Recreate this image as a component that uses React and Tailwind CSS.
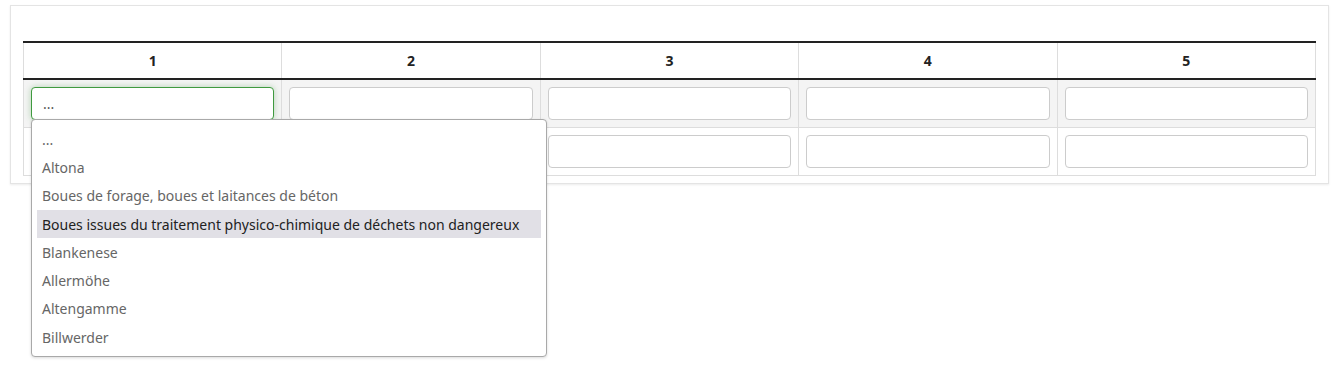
const options = [
  '...',
  'Altona',
  'Boues de forage, boues et laitances de béton',
  'Boues issues du traitement physico-chimique de déchets non dangereux',
  'Blankenese',
  'Allermöhe',
  'Altengamme',
  'Billwerder',
]

const columns = [1, 2, 3, 4, 5]

function Field({ focused, value }) {
  return (
    <div
      className={
        'h-[33px] rounded-[4px] border bg-white px-[11px] flex items-center text-[14px] text-[#555] ' +
        (focused
          ? 'border-[#3f9a3f] shadow-[0_0_6px_rgba(60,150,60,0.35)]'
          : 'border-[#cccccc]')
      }
    >
      {value}
    </div>
  )
}

function Dropdown() {
  return (
    <div className="absolute left-0 top-[32px] z-10 w-[516px] rounded-[4px] border border-[#a9a9a9] bg-white py-[5px] px-[5px] shadow-[0_1px_3px_rgba(0,0,0,0.15)]">
      {options.map((opt, i) => (
        <div
          key={opt}
          className={
            'h-[28.3px] flex items-center px-[5px] text-[14px] ' +
            (i === 3 ? 'bg-[#e1e0e6] text-[#222]' : 'text-[#666]')
          }
        >
          {opt}
        </div>
      ))}
    </div>
  )
}

export default function App() {
  return (
    <div className="min-h-[377px] pt-[5px] pl-[10px] font-['Noto_Sans','Open_Sans',sans-serif]">
      <div className="w-[1319px] border border-[#e4e4e4] bg-white px-3 pt-[35px] pb-[7px] shadow-[0_1px_2px_rgba(0,0,0,0.08)]">
        <table className="w-full table-fixed border-collapse">
          <thead>
            <tr className="border-t-2 border-b-2 border-[#222]">
              {columns.map((c) => (
                <th
                  key={c}
                  className="h-[37px] border-x border-x-[#dddddd] text-center text-[14px] font-bold text-[#222]"
                >
                  {c}
                </th>
              ))}
            </tr>
          </thead>
          <tbody>
            {[0, 1].map((row) => (
              <tr key={row} className={row === 0 ? 'bg-[#f4f4f4]' : 'bg-white'}>
                {columns.map((c) => (
                  <td
                    key={c}
                    className="h-[48px] border border-[#dddddd] px-[7px] pt-[7px] pb-[7px] align-top"
                  >
                    <div className="relative">
                      <Field focused={row === 0 && c === 1} value={row === 0 && c === 1 ? '...' : ''} />
                      {row === 0 && c === 1 && <Dropdown />}
                    </div>
                  </td>
                ))}
              </tr>
            ))}
          </tbody>
        </table>
      </div>
    </div>
  )
}
